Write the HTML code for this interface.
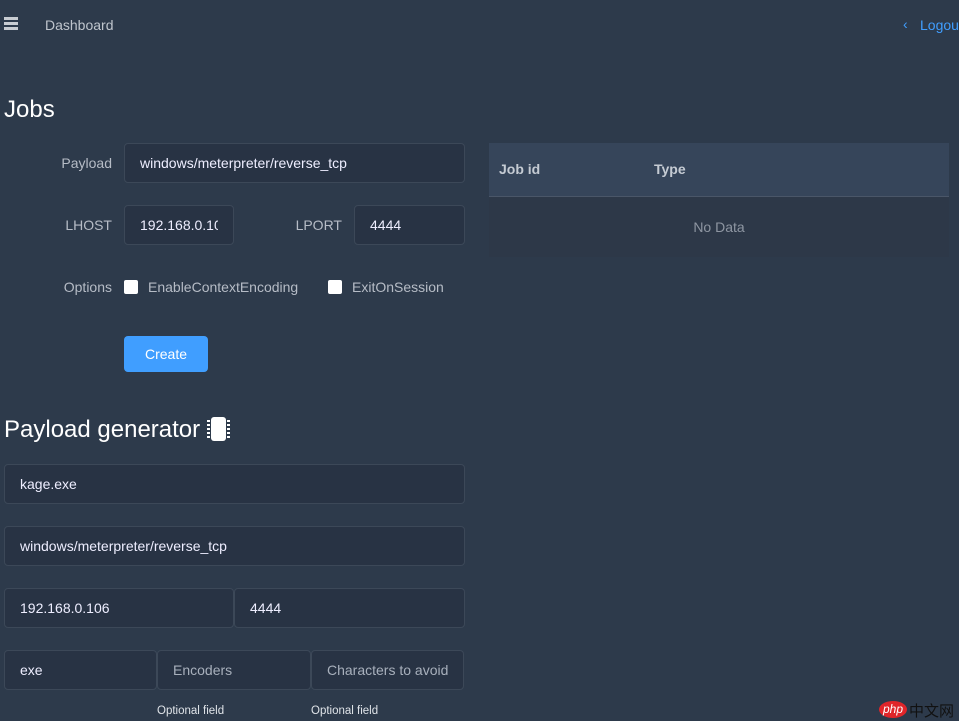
<!DOCTYPE html>
<html><head><meta charset="utf-8"><style>
*{box-sizing:border-box;margin:0;padding:0}
body{width:959px;height:720px;background:#2d3a4b;font-family:"Liberation Sans",sans-serif;position:relative;overflow:hidden;color:#fff}
.a{position:absolute}
.in{position:absolute;background:#283344;border:1px solid #3c4858;border-radius:4px;color:#eef;font-size:14px;padding:0 15px;display:flex;align-items:center;height:40px;overflow:hidden;white-space:nowrap}
.in span{overflow:hidden;display:block}
.ph{color:#a8b0bc}
.lbl{position:absolute;color:#b6bcc6;font-size:14px;text-align:right}
.cb{position:absolute;width:14px;height:14px;background:#fff;border-radius:2px}
.opt{position:absolute;font-size:11.5px;color:#dfe3e8}
</style></head><body>
<div class="a" style="left:4px;top:17px;width:14px;height:3px;background:#c8ccd2;box-shadow:0 5px 0 #c8ccd2,0 10px 0 #c8ccd2"></div>
<div class="a" style="left:45px;top:17px;font-size:14px;color:#bfc5cd">Dashboard</div>
<div class="a" style="left:903px;top:16px;font-size:14px;color:#409eff">&#8249;</div>
<div class="a" style="left:920px;top:17px;font-size:14px;color:#409eff">Logout</div>
<div class="a" style="left:4px;top:96px;font-size:24px">Jobs</div>
<div class="lbl" style="left:40px;top:155px;width:72px">Payload</div>
<div class="in" style="left:124px;top:143px;width:341px">windows/meterpreter/reverse_tcp</div>
<div class="lbl" style="left:40px;top:217px;width:72px">LHOST</div>
<div class="in" style="left:124px;top:205px;width:110px"><span>192.168.0.106</span></div>
<div class="lbl" style="left:270px;top:217px;width:72px">LPORT</div>
<div class="in" style="left:354px;top:205px;width:111px">4444</div>
<div class="lbl" style="left:40px;top:279px;width:72px">Options</div>
<div class="cb" style="left:124px;top:280px"></div>
<div class="lbl" style="left:148px;top:279px;text-align:left">EnableContextEncoding</div>
<div class="cb" style="left:328px;top:280px"></div>
<div class="lbl" style="left:352px;top:279px;text-align:left">ExitOnSession</div>
<div class="a" style="left:124px;top:336px;width:84px;height:36px;background:#409eff;border-radius:4px;font-size:14px;display:flex;align-items:center;justify-content:center">Create</div>
<div class="a" style="left:4px;top:416px;font-size:24px">Payload generator</div>
<div class="a" style="left:207px;top:417px;width:24px;height:24px">
<div class="a" style="left:4px;top:0;width:15px;height:24px;background:#fff;border-radius:3px"></div>
<div class="a" style="left:0;top:3px;width:3px;height:18px;background:repeating-linear-gradient(#fff 0 2px,transparent 2px 4px)"></div>
<div class="a" style="left:20px;top:3px;width:3px;height:18px;background:repeating-linear-gradient(#fff 0 2px,transparent 2px 4px)"></div></div>
<div class="in" style="left:4px;top:464px;width:461px">kage.exe</div>
<div class="in" style="left:4px;top:526px;width:461px">windows/meterpreter/reverse_tcp</div>
<div class="in" style="left:4px;top:588px;width:230px">192.168.0.106</div>
<div class="in" style="left:234px;top:588px;width:231px">4444</div>
<div class="in" style="left:4px;top:650px;width:153px">exe</div>
<div class="in ph" style="left:157px;top:650px;width:154px">Encoders</div>
<div class="in ph" style="left:311px;top:650px;width:153px">Characters to avoid</div>
<div class="opt" style="left:157px;top:705px">Optional field</div>
<div class="opt" style="left:311px;top:705px">Optional field</div>
<div class="a" style="left:489px;top:143px;width:460px;height:114px;background:#2d3848">
<div style="height:54px;background:#36455a;border-bottom:1px solid #4a5668;position:relative">
<div class="a" style="left:10px;top:18px;font-size:14px;font-weight:bold;color:#c5cbd3">Job id</div>
<div class="a" style="left:165px;top:18px;font-size:14px;font-weight:bold;color:#c5cbd3">Type</div></div>
<div style="text-align:center;padding-top:22px;font-size:14px;color:#8e96a2">No Data</div></div>
<div class="a" style="left:879px;top:701px;width:28px;height:17px;background:#e0252a;border-radius:50%;font-size:12px;font-style:italic;color:#fff;text-align:center;line-height:17px">php</div>
<div class="a" style="left:909px;top:700px;font-size:15px;color:#111;font-family:'Noto Sans CJK SC',sans-serif">中文网</div>
</body></html>
